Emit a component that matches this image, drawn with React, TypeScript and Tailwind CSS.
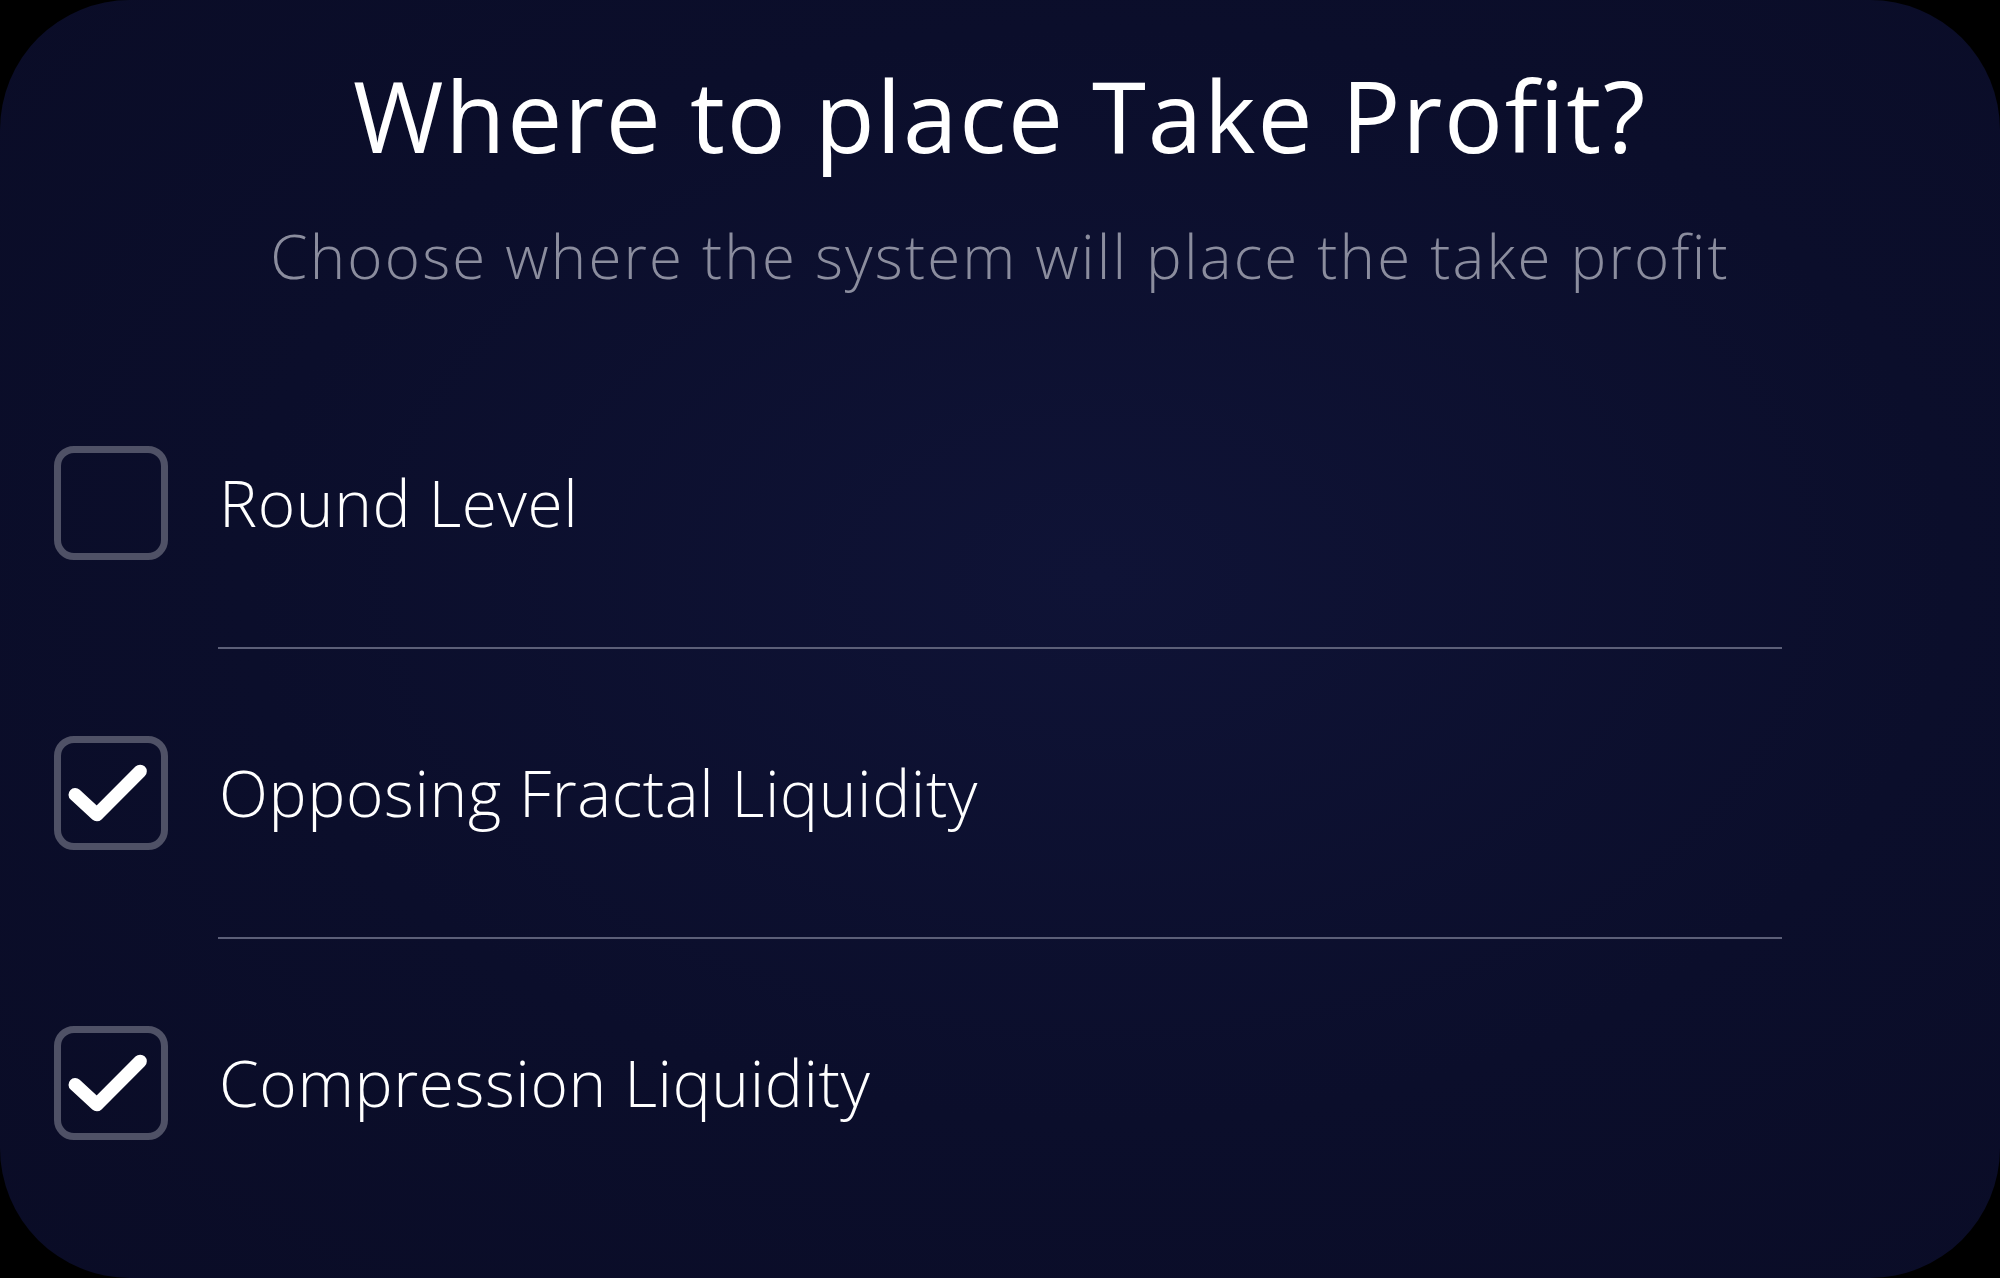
import React from "react";

const options = [
  { label: "Round Level", checked: false },
  { label: "Opposing Fractal Liquidity", checked: true },
  { label: "Compression Liquidity", checked: true },
];

function CheckBox({ checked }: { checked: boolean }) {
  return (
    <div className="w-[114px] h-[114px] shrink-0 rounded-[20px] border-[7px] border-[#4f5166] flex items-center justify-center">
      {checked && (
        <svg viewBox="0 0 24 24" className="w-[100px] h-[100px]" fill="none">
          <path
            d="M3.4 12.4L8.6 17.2L19 6.8"
            stroke="#ffffff"
            strokeWidth="3.2"
            strokeLinecap="round"
            strokeLinejoin="round"
          />
        </svg>
      )}
    </div>
  );
}

export default function App() {
  return (
    <div className="w-[2000px] h-[1278px] bg-black">
      <div
        className="w-full h-full rounded-[130px] bg-[radial-gradient(ellipse_at_55%_45%,#0f1336_0%,#0b0e2b_55%,#0a0c26_100%)] flex flex-col text-white"
        style={{ fontFamily: '"Open Sans", sans-serif' }}
      >
        <h1 className="mt-[66px] text-center text-[98px] leading-none font-normal tracking-[1.8px]">
          Where to place Take Profit?
        </h1>
        <p className="mt-[62px] text-center text-[60px] leading-none text-[#8b8d9e] font-light tracking-[2.2px]">
          Choose where the system will place the take profit
        </p>
        <ul className="mt-[160px] pl-[54px] flex flex-col">
          {options.map((opt, idx) => (
            <li key={idx} className="flex flex-col">
              {idx > 0 && (
                <div className="ml-[164px] mr-[218px] h-[2px] bg-[#5c5f78] my-[87px]" />
              )}
              <div className="flex items-center gap-[51px]">
                <CheckBox checked={opt.checked} />
                <span className="text-[64px] leading-none font-light tracking-[0.6px]">
                  {opt.label}
                </span>
              </div>
            </li>
          ))}
        </ul>
      </div>
    </div>
  );
}
